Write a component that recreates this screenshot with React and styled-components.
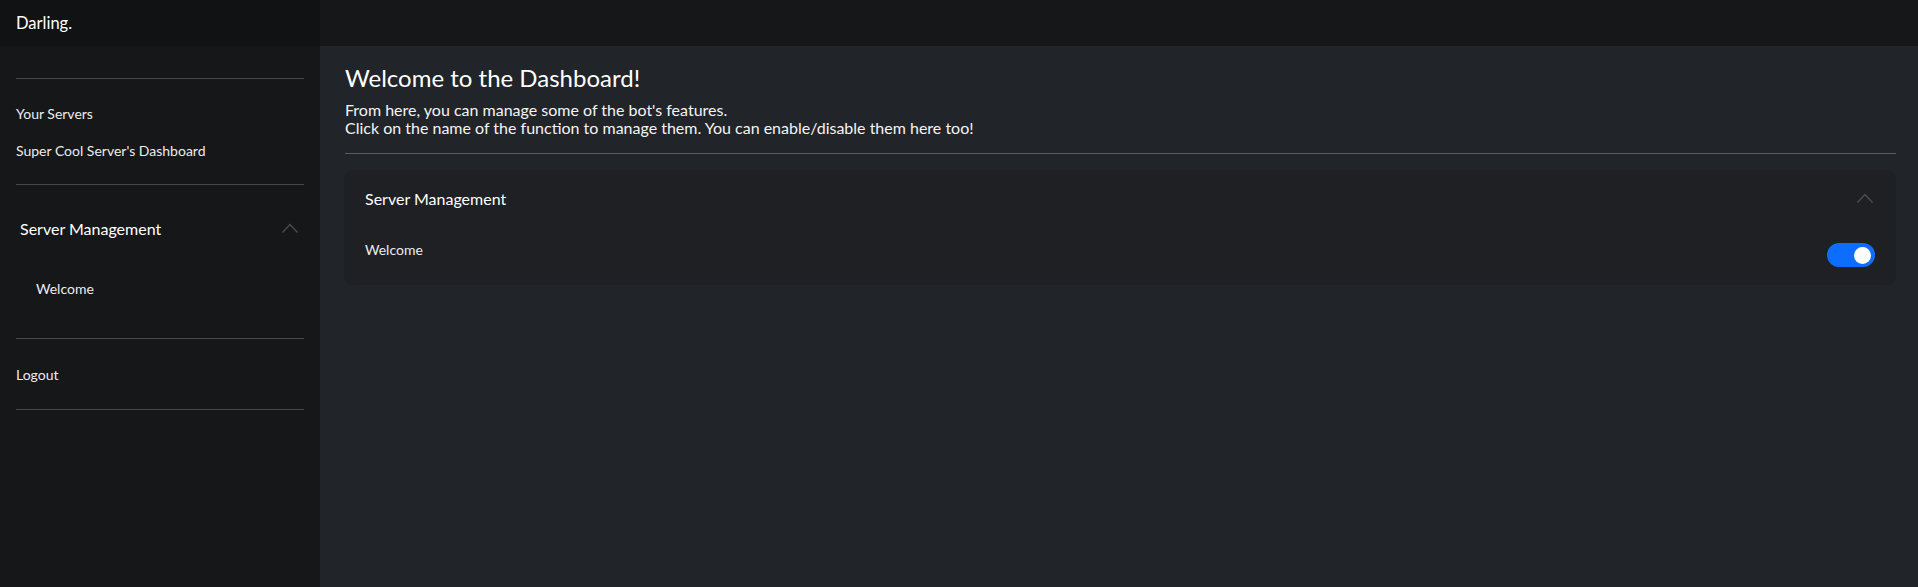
import styled, { createGlobalStyle } from 'styled-components';

const GlobalStyle = createGlobalStyle`
  * {
    box-sizing: border-box;
  }

  html, body {
    margin: 0;
    padding: 0;
    background: #212429;
  }

  body {
    font-family: "Segoe UI", Lato, "Liberation Sans", sans-serif;
    color: #f2f2f2;
  }
`;

const Layout = styled.div`
  display: flex;
  min-height: 587px;
`;

const Sidebar = styled.aside`
  width: 320px;
  flex-shrink: 0;
  background: #161719;
  display: flex;
  flex-direction: column;
`;

const Brand = styled.div`
  height: 46px;
  padding-left: 16px;
  display: flex;
  align-items: center;
  background: #111214;
  font-size: 16.5px;
  color: #fff;
`;

const SideBody = styled.nav`
  padding: 32px 16px 0;
`;

const Divider = styled.hr`
  margin: 0;
  border: none;
  border-top: 1px solid ${({ light }) => (light ? '#5b5c60' : '#46474b')};
`;

const NavGroup = styled.div`
  padding: ${({ pad }) => pad || '16px 0 15px'};
`;

const NavItem = styled.a`
  display: flex;
  align-items: center;
  height: 37px;
  padding-left: ${({ indent }) => indent || 0}px;
  font-size: 14px;
  color: #ececec;
  text-decoration: none;
  cursor: pointer;
`;

const SectionHeader = styled.button`
  width: 100%;
  height: 50px;
  display: flex;
  align-items: center;
  justify-content: space-between;
  padding: 0 6px 0 4px;
  background: none;
  border: none;
  font-family: inherit;
  font-size: 16px;
  color: #fff;
  cursor: pointer;
`;

const SubList = styled.div`
  margin-top: 17px;
`;

const Main = styled.main`
  flex: 1;
  display: flex;
  flex-direction: column;
`;

const TopBar = styled.header`
  height: 46px;
  background: #161719;
`;

const Content = styled.section`
  padding: 17px 22px 0 25px;
`;

const Heading = styled.h1`
  margin: 0;
  font-size: 24px;
  line-height: 29px;
  font-weight: 400;
  color: #fff;
`;

const Intro = styled.p`
  margin: 9px 0 16px;
  font-size: 16px;
  line-height: 18px;
  color: #f4f4f4;
`;

const Card = styled.div`
  margin-top: 16px;
  margin-left: -1px;
  background: #1e2024;
  border-radius: 9px;
`;

const CardHeader = styled.div`
  height: 56px;
  padding: 0 23px 0 21px;
  display: flex;
  align-items: center;
  justify-content: space-between;
  font-size: 16px;
  color: #fff;
`;

const CardBody = styled.div`
  padding: 14px 21px 18px;
`;

const FeatureRow = styled.div`
  display: flex;
  align-items: flex-start;
  justify-content: space-between;
`;

const FeatureName = styled.span`
  font-size: 14px;
  line-height: 20px;
  color: #ececec;
  cursor: pointer;
`;

const Switch = styled.button`
  position: relative;
  width: 48px;
  height: 24px;
  margin-top: 3px;
  padding: 0;
  border: none;
  border-radius: 12px;
  background: ${({ on }) => (on ? '#0d6efd' : '#3a3d42')};
  cursor: pointer;

  &::after {
    content: '';
    position: absolute;
    top: 3.5px;
    ${({ on }) => (on ? 'right: 4px;' : 'left: 4px;')}
    width: 17px;
    height: 17px;
    border-radius: 50%;
    background: #fff;
  }
`;

const Chevron = () => (
  <svg width="16" height="10" viewBox="0 0 16 10" fill="none">
    <polyline points="0.5,9.5 8,1.5 15.5,9.5" stroke="#4b4d51" strokeWidth="1.3" />
  </svg>
);

const App = () => {
  return (
    <>
      <GlobalStyle />
      <Layout>
        <Sidebar>
          <Brand>Darling.</Brand>
          <SideBody>
            <Divider />
            <NavGroup>
              <NavItem>Your Servers</NavItem>
              <NavItem>Super Cool Server's Dashboard</NavItem>
            </NavGroup>
            <Divider />
            <NavGroup pad="18px 0 31px">
              <SectionHeader>
                Server Management
                <Chevron />
              </SectionHeader>
              <SubList>
                <NavItem indent={20}>Welcome</NavItem>
              </SubList>
            </NavGroup>
            <Divider />
            <NavGroup pad="17px 0 16px">
              <NavItem>Logout</NavItem>
            </NavGroup>
            <Divider />
          </SideBody>
        </Sidebar>
        <Main>
          <TopBar />
          <Content>
            <Heading>Welcome to the Dashboard!</Heading>
            <Intro>
              From here, you can manage some of the bot's features.
              <br />
              Click on the name of the function to manage them. You can enable/disable them here too!
            </Intro>
            <Divider light />
            <Card>
              <CardHeader>
                Server Management
                <Chevron />
              </CardHeader>
              <CardBody>
                <FeatureRow>
                  <FeatureName>Welcome</FeatureName>
                  <Switch on aria-label="Toggle Welcome" />
                </FeatureRow>
              </CardBody>
            </Card>
          </Content>
        </Main>
      </Layout>
    </>
  );
};

export default App;
